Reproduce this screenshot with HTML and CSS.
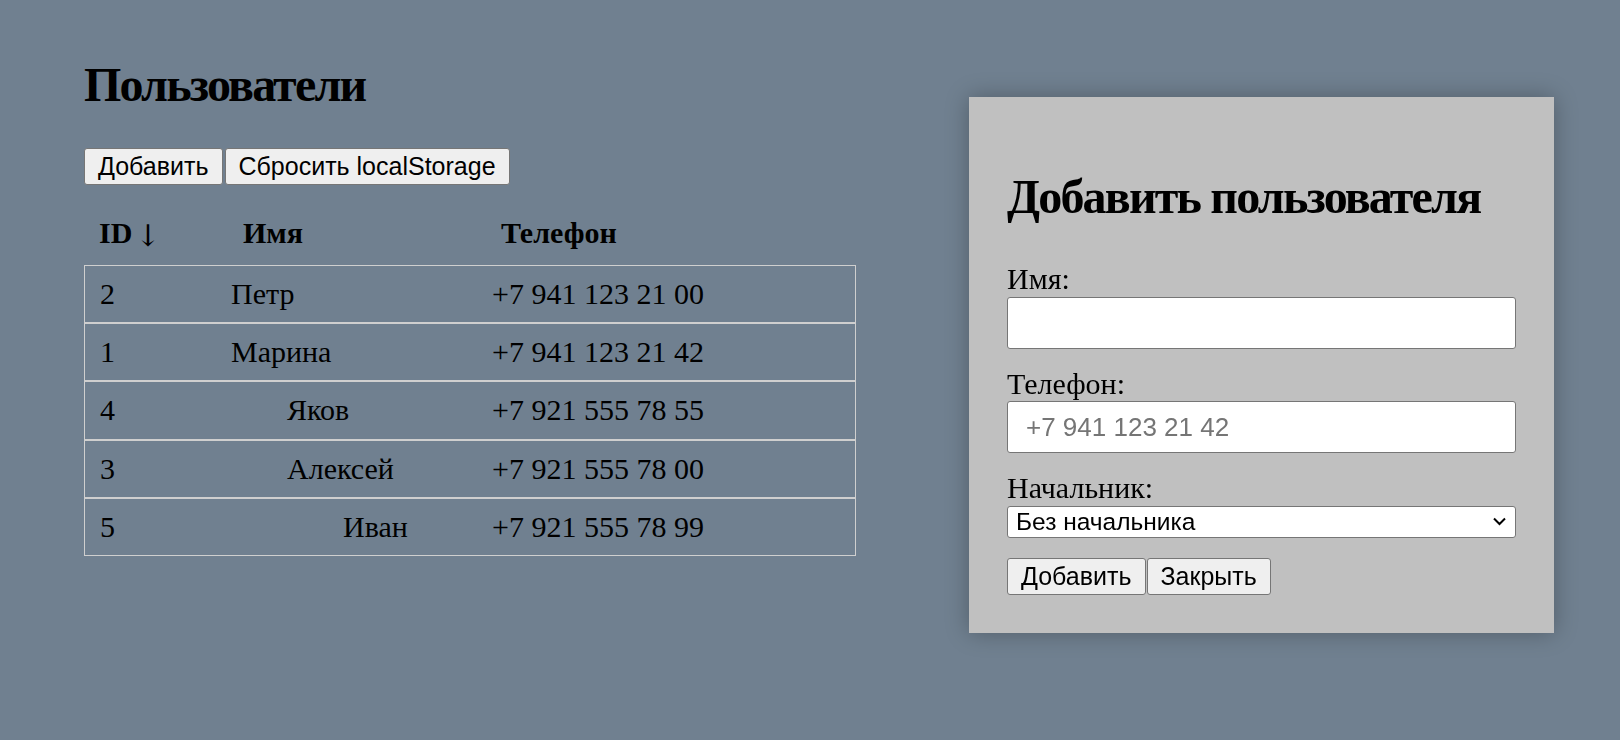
FILE: index.html
```
<!DOCTYPE html>
<html lang="ru">
<head>
<meta charset="utf-8">
<title>Пользователи</title>
<link rel="stylesheet" href="styles.css">
</head>
<body>
<main class="page">
  <section class="users">
    <h1 class="title">Пользователи</h1>
    <div class="toolbar">
      <button class="btn" type="button">Добавить</button>
      <button class="btn" type="button">Сбросить localStorage</button>
    </div>
    <div class="thead">
      <span class="th">ID<span class="sort">↓</span></span>
      <span class="th">Имя</span>
      <span class="th">Телефон</span>
    </div>
    <div class="tbody">
      <div class="row"><span class="cell">2</span><span class="cell">Петр</span><span class="cell">+7 941 123 21 00</span></div>
      <div class="row"><span class="cell">1</span><span class="cell">Марина</span><span class="cell">+7 941 123 21 42</span></div>
      <div class="row"><span class="cell">4</span><span class="cell level-1">Яков</span><span class="cell">+7 921 555 78 55</span></div>
      <div class="row"><span class="cell">3</span><span class="cell level-1">Алексей</span><span class="cell">+7 921 555 78 00</span></div>
      <div class="row"><span class="cell">5</span><span class="cell level-2">Иван</span><span class="cell">+7 921 555 78 99</span></div>
    </div>
  </section>

  <div class="modal">
    <h2 class="modal-title">Добавить пользователя</h2>
    <div class="field">
      <label class="label" for="name">Имя:</label>
      <input class="input" id="name" type="text">
    </div>
    <div class="field">
      <label class="label" for="phone">Телефон:</label>
      <input class="input" id="phone" type="text" placeholder="+7 941 123 21 42">
    </div>
    <div class="field field-last">
      <label class="label" for="boss">Начальник:</label>
      <div class="select-wrap">
        <select class="select" id="boss">
          <option>Без начальника</option>
        </select>
        <svg class="chevron" width="13" height="9" viewBox="0 0 13 9"><path d="M1 1.5 L6.5 7 L12 1.5" fill="none" stroke="#000" stroke-width="2"/></svg>
      </div>
    </div>
    <div class="toolbar toolbar-modal">
      <button class="btn" type="button">Добавить</button>
      <button class="btn" type="button">Закрыть</button>
    </div>
  </div>
</main>
</body>
</html>
```

FILE: styles.css
```
html, body {
  margin: 0;
  padding: 0;
}

body {
  background: #708090;
  font-family: "Liberation Serif", "Times New Roman", serif;
  color: #000;
  min-height: 740px;
}

.page {
  display: flex;
  padding: 57px 0 0 84px;
}

.users {
  width: 772px;
}

.title {
  margin: 0;
  font-size: 48px;
  line-height: 56px;
  font-weight: bold;
  letter-spacing: -1.8px;
  white-space: nowrap;
}

.toolbar {
  display: flex;
  gap: 2px;
}

.toolbar-modal {
  gap: 1px;
}

.users .toolbar {
  margin-top: 35px;
}

.btn {
  font-family: "Liberation Sans", Arial, sans-serif;
  font-size: 25px;
  line-height: 29px;
  padding: 3px 13px;
  background: #efefef;
  color: #000;
  border: 1px solid #767676;
  border-radius: 3px;
  margin: 0;
}

.thead {
  display: grid;
  grid-template-columns: 144px 258px 1fr;
  margin-top: 31px;
  margin-bottom: 15px;
}

.th {
  padding-left: 15px;
  font-size: 30px;
  line-height: 34px;
  font-weight: bold;
}

.sort {
  display: inline-block;
  margin-left: 3px;
  font-family: "DejaVu Serif", serif;
  font-weight: normal;
  font-size: 30px;
  line-height: 34px;
  transform: translateY(3px);
}

.row {
  display: grid;
  grid-template-columns: 131px 261px 1fr;
  border: 1px solid #cfcfcf;
}

.cell {
  padding: 11px 15px;
  font-size: 30px;
  line-height: 34.2px;
}

.cell.level-1 {
  padding-left: 71px;
}

.cell.level-2 {
  padding-left: 127px;
}

.modal {
  position: fixed;
  left: 969px;
  top: 97px;
  width: 585px;
  box-sizing: border-box;
  padding: 38px;
  background: #c0c0c0;
  box-shadow: 0 0 22px rgba(0, 0, 0, 0.28);
}

.modal-title {
  margin: 34px 0 37px;
  font-size: 48px;
  line-height: 56px;
  font-weight: bold;
  letter-spacing: -1.8px;
  white-space: nowrap;
}

.field {
  display: flex;
  flex-direction: column;
  margin-bottom: 18px;
}

.field-last {
  margin-bottom: 20px;
}

.label {
  font-size: 30px;
  line-height: 34.5px;
}

.input {
  box-sizing: border-box;
  width: 100%;
  height: 52px;
  margin: 0;
  padding: 10px 18px;
  font-family: "Liberation Sans", Arial, sans-serif;
  font-size: 26px;
  border: 1px solid #767676;
  border-radius: 3px;
  background: #fff;
  color: #000;
}

.input::placeholder {
  color: #757575;
}

.select-wrap {
  position: relative;
}

.select {
  appearance: none;
  -webkit-appearance: none;
  box-sizing: border-box;
  width: 100%;
  height: 32px;
  margin: 0;
  padding: 0 30px 0 8px;
  font-family: "Liberation Sans", Arial, sans-serif;
  font-size: 24.5px;
  line-height: 28px;
  border: 1px solid #767676;
  border-radius: 3px;
  background: #fff;
  color: #000;
}

.chevron {
  position: absolute;
  right: 10px;
  top: 11px;
  pointer-events: none;
}
```
